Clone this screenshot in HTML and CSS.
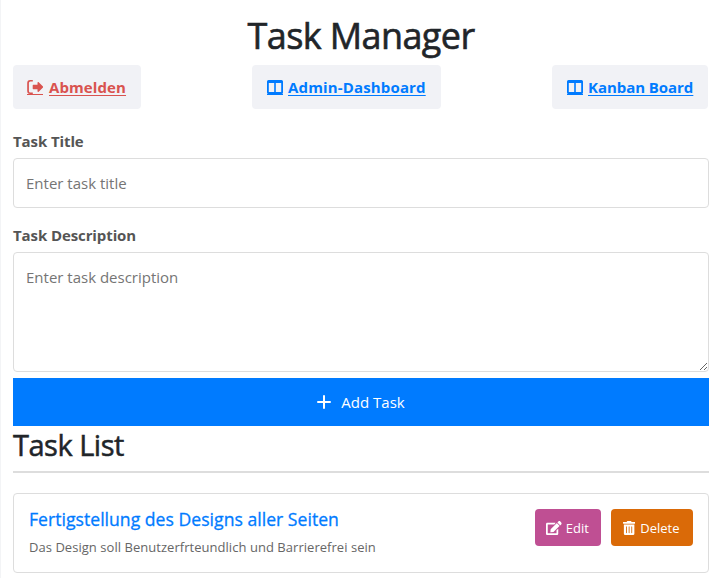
FILE: index.html
```html
<!DOCTYPE html>
<html lang="de">
<head>
<meta charset="utf-8">
<title>Task Manager</title>
<link rel="stylesheet" href="styles.css">
</head>
<body>
<svg class="sprite" aria-hidden="true">
  <symbol id="logout" viewBox="0 0 16 16"><path d="M5.800 1H3.200A3 3 0 0 0 .2 4v8a3 3 0 0 0 3 3H5.800V13.400H3.400A1.500 1.500 0 0 1 1.900 11.900V4.100A1.500 1.500 0 0 1 3.400 2.600H5.800zM6.300 5.800h4.200V3.700c0-.7.7-1 1.200-.5l4.300 4.300a.7.7 0 0 1 0 1l-4.300 4.300c-.5.5-1.200.2-1.200-.5v-2.100H6.300a.6.6 0 0 1-.6-.6V6.400a.6.6 0 0 1 .6-.6z"/></symbol>
  <symbol id="columns" viewBox="0 0 16 16"><path d="M1.500 1h13A1.500 1.500 0 0 1 16 2.500v11a1.500 1.500 0 0 1-1.500 1.500h-13A1.500 1.500 0 0 1 0 13.500v-11A1.500 1.500 0 0 1 1.500 1zM1.800 4v9h5.400V4zM14.200 4H8.800v9h5.400z" fill-rule="evenodd"/></symbol>
  <symbol id="edit" viewBox="0 0 576 512"><path d="M402.600 83.200l90.200 90.200c3.800 3.800 3.800 10 0 13.800L274.400 405.600l-92.800 10.300c-12.400 1.400-22.900-9.100-21.500-21.500l10.300-92.800L388.800 83.200c3.800-3.800 10-3.800 13.800 0zm162-22.900l-48.800-48.800c-15.200-15.200-39.900-15.200-55.200 0l-35.400 35.400c-3.800 3.800-3.800 10 0 13.800l90.200 90.200c3.800 3.800 10 3.800 13.800 0l35.400-35.400c15.200-15.300 15.200-40 0-55.200zM384 346.200V448H64V128h229.800c3.200 0 6.200-1.300 8.500-3.500l40-40c7.600-7.600 2.200-20.500-8.500-20.500H48C21.500 64 0 85.500 0 112v352c0 26.500 21.500 48 48 48h352c26.500 0 48-21.500 48-48V306.200c0-10.700-12.900-16-20.500-8.500l-40 40c-2.200 2.300-3.500 5.300-3.500 8.500z"/></symbol>
  <symbol id="trash" viewBox="0 0 448 512"><path d="M32 464a48 48 0 0 0 48 48h288a48 48 0 0 0 48-48V128H32zm272-256a16 16 0 0 1 32 0v224a16 16 0 0 1-32 0zm-96 0a16 16 0 0 1 32 0v224a16 16 0 0 1-32 0zm-96 0a16 16 0 0 1 32 0v224a16 16 0 0 1-32 0zM432 32H312l-9.400-18.700A24 24 0 0 0 281.100 0H166.800a23.720 23.720 0 0 0-21.400 13.300L136 32H16A16 16 0 0 0 0 48v32a16 16 0 0 0 16 16h416a16 16 0 0 0 16-16V48a16 16 0 0 0-16-16z"/></symbol>
  <symbol id="plus" viewBox="0 0 14 14"><path d="M6 1a1 1 0 0 1 2 0v5h5a1 1 0 0 1 0 2H8v5a1 1 0 0 1-2 0V8H1a1 1 0 0 1 0-2h5z"/></symbol>
</svg>
<main class="container">
  <h1 class="title">Task Manager</h1>
  <nav class="nav">
    <a class="nav-link nav-link-logout" href="#"><svg class="nav-icon"><use href="#logout"/></svg><span class="nav-text">Abmelden</span></a>
    <a class="nav-link nav-link-admin" href="#"><svg class="nav-icon"><use href="#columns"/></svg><span class="nav-text">Admin-Dashboard</span></a>
    <a class="nav-link nav-link-kanban" href="#"><svg class="nav-icon"><use href="#columns"/></svg><span class="nav-text">Kanban Board</span></a>
  </nav>
  <form class="form">
    <label class="label" for="title">Task Title</label>
    <input class="field field-title" id="title" type="text" placeholder="Enter task title">
    <label class="label label-desc" for="desc">Task Description</label>
    <textarea class="field field-desc" id="desc" placeholder="Enter task description"></textarea>
    <button class="add" type="button"><svg class="plus-icon"><use href="#plus"/></svg><span>Add Task</span></button>
  </form>
  <h2 class="list-title">Task List</h2>
  <article class="task">
    <div class="task-body">
      <h3 class="task-title">Fertigstellung des Designs aller Seiten</h3>
      <p class="task-desc">Das Design soll Benutzerfrteundlich und Barrierefrei sein</p>
    </div>
    <div class="actions">
      <button class="btn btn-edit" type="button"><svg class="edit-icon"><use href="#edit"/></svg><span>Edit</span></button>
      <button class="btn btn-delete" type="button"><svg class="trash-icon"><use href="#trash"/></svg><span>Delete</span></button>
    </div>
  </article>
</main>
</body>
</html>
```
FILE: styles.css
```css
* { box-sizing: border-box; }
html, body { margin: 0; height: 578px; overflow: hidden; }
body { background: #fff; color: #212529; font-family: "Open Sans", "Noto Sans", sans-serif; }
svg { display: block; fill: currentColor; flex: none; }
.sprite { width: 0; height: 0; position: absolute; }
.container { height: 578px; padding: 14px 11px 0 12px; border-left: 1px solid #f3f4f6; }
h1, h2, h3, p { margin: 0; }
.title { height: 51px; line-height: 44px; text-align: center; font-size: 36px; font-weight: 400; letter-spacing: -0.6px; -webkit-text-stroke: 0.6px currentColor; }
.nav { display: flex; justify-content: space-between; padding-right: 1px; }
.nav-link { display: flex; align-items: center; gap: 5px; height: 44px; padding: 0 15px; border-radius: 4px; background: #f1f2f6; color: #007bff; font-size: 15px; font-weight: 700; text-decoration: none; white-space: nowrap; }
.nav-link-logout { width: 128px; padding-left: 14px; gap: 6px; color: #d9534f; letter-spacing: 0.1px; }
.nav-link-admin { width: 189px; letter-spacing: 0.15px; }
.nav-link-kanban { width: 156px; letter-spacing: -0.05px; }
.nav-icon { width: 16px; height: 16px; box-shadow: inset 0 -1px currentColor; }
.nav-text { text-decoration: underline; text-decoration-thickness: 1px; text-underline-offset: 2px; }
.form { display: flex; flex-direction: column; padding-top: 21px; }
.label { height: 28px; line-height: 22px; font-size: 15px; font-weight: 700; color: #555; letter-spacing: -0.1px; }
.label-desc { margin-top: 16px; }
.field { width: 100%; border: 1px solid #ddd; border-radius: 4px; padding: 12px; font-family: inherit; font-size: 15px; line-height: 24px; background: #fff; outline: 0; }
.field::placeholder { color: #757575; opacity: 1; }
.field-title { height: 50px; }
.field-desc { height: 120px; resize: vertical; }
.add { display: flex; align-items: center; justify-content: center; gap: 10px; height: 48px; margin-top: 6px; padding: 0; border: 0; background: #007bff; color: #fff; font-family: inherit; font-size: 15px; }
.plus-icon { width: 14px; height: 14px; }
.list-title { height: 47px; line-height: 38px; border-bottom: 2px solid #ddd; font-size: 29px; font-weight: 400; letter-spacing: -0.5px; -webkit-text-stroke: 0.5px currentColor; }
.task { display: flex; justify-content: space-between; height: 80px; margin-top: 20px; padding: 15px; border: 1px solid #ddd; border-radius: 4px; }
.task-title { height: 22px; line-height: 20px; font-size: 17.6px; font-weight: 400; color: #007bff; letter-spacing: 0.02px; -webkit-text-stroke: 0.3px currentColor; }
.task-desc { margin-top: 6px; line-height: 20px; font-size: 13px; color: #666; letter-spacing: 0.04px; }
.actions { display: flex; gap: 10px; }
.btn { display: flex; align-items: center; height: 37px; padding: 0 11px; border: 0; border-radius: 4px; color: #fff; font-family: inherit; font-size: 13px; }
.btn-edit { width: 66px; gap: 4px; background: #bf4f93; }
.btn-delete { width: 82px; gap: 5px; padding-left: 12px; background: #da6a08; }
.edit-icon { width: 15.75px; height: 14px; }
.trash-icon { width: 12.25px; height: 14px; }
```
